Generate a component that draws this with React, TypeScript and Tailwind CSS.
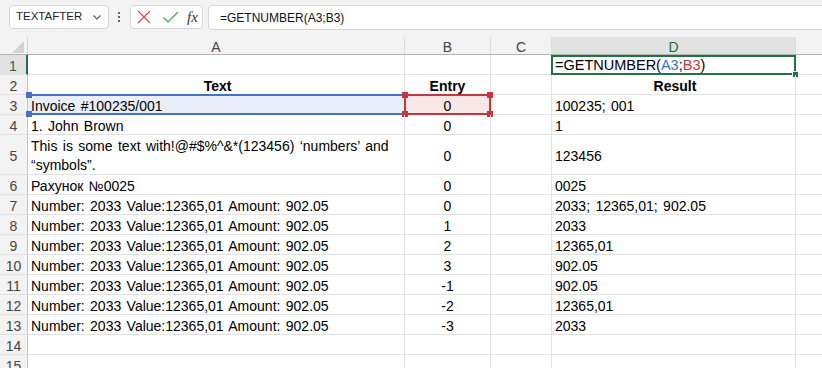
import React from "react";

const font = { fontFamily: '"Liberation Sans", Arial, sans-serif' };

type Row = {
  n: number;
  a?: React.ReactNode;
  b?: string;
  d?: string;
  h?: number;
  head?: boolean;
};

const num = "Number: 2033 Value:12365,01 Amount: 902.05";

const rows: Row[] = [
  { n: 1 },
  { n: 2, a: "Text", b: "Entry", d: "Result", head: true },
  { n: 3, a: "Invoice #100235/001", b: "0", d: "100235; 001" },
  { n: 4, a: "1. John Brown", b: "0", d: "1" },
  {
    n: 5,
    h: 40,
    a: (
      <span className="leading-[19px]">
        This is some text with!@#$%^&amp;*(123456) ‘numbers’ and
        <br />
        “symbols”.
      </span>
    ),
    b: "0",
    d: "123456",
  },
  { n: 6, a: "Рахунок №0025", b: "0", d: "0025" },
  { n: 7, a: num, b: "0", d: "2033; 12365,01; 902.05" },
  { n: 8, a: num, b: "1", d: "2033" },
  { n: 9, a: num, b: "2", d: "12365,01" },
  { n: 10, a: num, b: "3", d: "902.05" },
  { n: 11, a: num, b: "-1", d: "902.05" },
  { n: 12, a: num, b: "-2", d: "12365,01" },
  { n: 13, a: num, b: "-3", d: "2033" },
  { n: 14 },
  { n: 15 },
];

const Handle = ({ className }: { className: string }) => (
  <div className={"absolute w-[6px] h-[6px] " + className}></div>
);

const Toolbar = () => (
  <div className="h-[37px] flex items-start pt-[5px] bg-[#f3f3f3]">
    <div className="ml-[9px] w-[100px] h-[24px] rounded-[4px] border border-[#d6d6d6] bg-white flex items-center justify-between pl-[6px] pr-[6px]">
      <span className="text-[11.5px] text-[#1f1f1f]">TEXTAFTER</span>
      <svg width="10" height="10" viewBox="0 0 10 10">
        <path d="M1.5 3.5 L5 7 L8.5 3.5" fill="none" stroke="#555" strokeWidth="1.1" />
      </svg>
    </div>
    <div className="w-[20px] h-[24px] flex flex-col items-center justify-center gap-[2px]">
      <div className="w-[2px] h-[2px] bg-[#333] rounded-full"></div>
      <div className="w-[2px] h-[2px] bg-[#333] rounded-full"></div>
      <div className="w-[2px] h-[2px] bg-[#333] rounded-full"></div>
    </div>
    <div className="ml-[1px] w-[73px] h-[24px] rounded-[4px] border border-[#d6d6d6] bg-white flex items-center pl-[5px]">
      <svg width="16" height="16" viewBox="0 0 16 16">
        <path d="M2 2 L14 14 M14 2 L2 14" stroke="#e5484d" strokeWidth="1.2" />
      </svg>
      <svg width="18" height="16" viewBox="0 0 18 16" className="ml-[10px]">
        <path d="M1.5 8.5 L6 13 L16 3" fill="none" stroke="#3fa34d" strokeWidth="1.2" />
      </svg>
      <span
        className="ml-[7px] text-[15px] italic text-[#333]"
        style={{ fontFamily: '"Liberation Serif", "Times New Roman", serif' }}
      >
        fx
      </span>
    </div>
    <div className="ml-[5px] flex-1 -mr-2 h-[25px] rounded-[4px] border border-[#d6d6d6] bg-white flex items-center pl-[11px]">
      <span className="text-[12px] text-[#111]">=GETNUMBER(A3;B3)</span>
    </div>
  </div>
);

const ColHeaders = () => (
  <div className="flex h-[18px] bg-[#f3f3f3] border-b border-[#b3b3b3] text-[14px] text-[#444]">
    <div className="w-[28px] relative border-r border-[#d4d4d4]">
      <svg width="12" height="12" viewBox="0 0 12 12" className="absolute right-[3px] bottom-[1px]">
        <polygon points="12,0 12,12 0,12" fill="#d3d3d3" />
      </svg>
    </div>
    <div className="w-[377px] pt-[3px] border-r border-[#dcdcdc] flex items-center justify-center">A</div>
    <div className="w-[86px] pt-[3px] border-r border-[#dcdcdc] flex items-center justify-center">B</div>
    <div className="w-[61px] pt-[3px] border-r border-[#dcdcdc] flex items-center justify-center">C</div>
    <div className="w-[244px] pt-[3px] border-r border-[#dcdcdc] bg-[#e1e1e1] flex items-center justify-center text-[#1e6b42]">
      D
    </div>
    <div className="flex-1"></div>
  </div>
);

const GridRow = ({ r }: { r: Row }) => {
  const h = r.h ?? 20;
  const sel = r.n === 1;
  const three = r.n === 3;
  const cell = "border-r border-b border-[#e1e1e1] flex items-center pt-[3px]";
  const w = r.head ? "font-bold justify-center" : "";
  return (
    <div className="flex text-[14px] text-black [word-spacing:1.5px]" style={{ height: h }}>
      <div
        className={
          "w-[28px] pt-[3px] border-b border-[#e1e1e1] flex items-center justify-center " +
          (sel
            ? "bg-[#e1e1e1] text-[#1e6b42] border-r-2 border-r-[#217346]"
            : "bg-[#f3f3f3] text-[#444] border-r border-r-[#c4c4c4]")
        }
      >
        {r.n}
      </div>
      <div
        className={
          "w-[377px] pl-[3px] relative " + cell + " " + w + (three ? " bg-[#e9eef8]" : "")
        }
      >
        {r.a}
        {three && (
          <>
            <div className="absolute left-0 right-0 -top-[1px] h-[2px] bg-[#4472c4]"></div>
            <div className="absolute left-0 right-0 -bottom-[1px] h-[2px] bg-[#4472c4]"></div>
            <Handle className="bg-[#4472c4] -left-[2px] -top-[3px] w-[4px]" />
            <Handle className="bg-[#4472c4] -left-[2px] -bottom-[3px] w-[4px]" />
          </>
        )}
      </div>
      <div
        className={
          "w-[86px] justify-center relative " + cell + " " + w + (three ? " bg-[#f9e7e7]" : "")
        }
      >
        {r.b}
        {three && (
          <>
            <div className="absolute -left-[1px] -right-[1px] -top-[1px] -bottom-[1px] border-2 border-[#c4373c]"></div>
            <Handle className="bg-[#c4373c] -left-[3px] -top-[3px]" />
            <Handle className="bg-[#c4373c] -right-[3px] -top-[3px]" />
            <Handle className="bg-[#c4373c] -left-[3px] -bottom-[3px]" />
            <Handle className="bg-[#c4373c] -right-[3px] -bottom-[3px]" />
          </>
        )}
      </div>
      <div className={"w-[61px] " + cell}></div>
      <div className={"w-[244px] pl-[3px] relative " + cell + " " + w}>
        {sel ? (
          <span className="text-[14.5px]">
            =GETNUMBER(<span className="text-[#3b6fd4]">A3</span>;
            <span className="text-[#c8383c]">B3</span>)
          </span>
        ) : (
          r.d
        )}
        {sel && (
          <>
            <div className="absolute -left-[1px] -right-[1px] top-0 -bottom-[1px] border-2 border-[#217346]"></div>
            <div className="absolute -right-[4px] -bottom-[4px] w-[7px] h-[7px] bg-[#217346] border border-white"></div>
          </>
        )}
      </div>
      <div className="flex-1 border-b border-[#e1e1e1]"></div>
    </div>
  );
};

export default function App() {
  return (
    <div className="w-[822px] h-[368px] overflow-hidden bg-white" style={font}>
      <Toolbar />
      <ColHeaders />
      {rows.map((r) => (
        <GridRow key={r.n} r={r} />
      ))}
    </div>
  );
}
